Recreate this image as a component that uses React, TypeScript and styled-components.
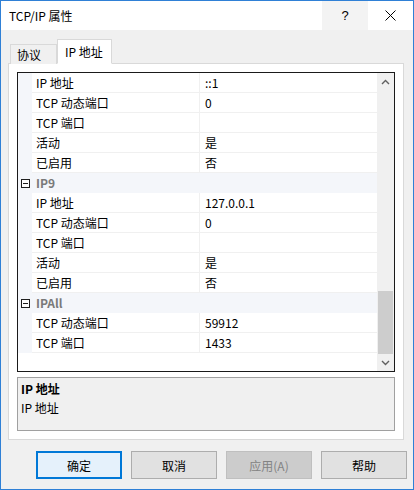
import React from 'react';
import styled, { createGlobalStyle, css } from 'styled-components';

type GridRow =
    | { kind: 'prop'; name: string; value: string }
    | { kind: 'cat'; name: string };

const rows: GridRow[] = [
    { kind: 'prop', name: 'IP 地址', value: '::1' },
    { kind: 'prop', name: 'TCP 动态端口', value: '0' },
    { kind: 'prop', name: 'TCP 端口', value: '' },
    { kind: 'prop', name: '活动', value: '是' },
    { kind: 'prop', name: '已启用', value: '否' },
    { kind: 'cat', name: 'IP9' },
    { kind: 'prop', name: 'IP 地址', value: '127.0.0.1' },
    { kind: 'prop', name: 'TCP 动态端口', value: '0' },
    { kind: 'prop', name: 'TCP 端口', value: '' },
    { kind: 'prop', name: '活动', value: '是' },
    { kind: 'prop', name: '已启用', value: '否' },
    { kind: 'cat', name: 'IPAll' },
    { kind: 'prop', name: 'TCP 动态端口', value: '59912' },
    { kind: 'prop', name: 'TCP 端口', value: '1433' },
];

export default function App() {
    return (
        <>
            <GlobalStyle />
            <Window>
                <TitleBar>
                    <Title>TCP/IP 属性</Title>
                    <HelpButton>?</HelpButton>
                    <CloseButton>
                        <svg width="11" height="11" viewBox="0 0 11 11">
                            <path d="M0.5 0.5 L10.5 10.5 M10.5 0.5 L0.5 10.5" stroke="#000" strokeWidth="1" />
                        </svg>
                    </CloseButton>
                </TitleBar>

                <Body>
                    <TabStrip>
                        <Tab>协议</Tab>
                        <Tab active>IP 地址</Tab>
                    </TabStrip>

                    <TabPanel>
                        <PropertyGrid>
                            <GridContent>
                                {rows.map((row, i) =>
                                    row.kind === 'cat' ? (
                                        <CategoryRow key={i}>
                                            <MarginCell>
                                                <svg width="9" height="9" viewBox="0 0 9 9">
                                                    <rect x="0.5" y="0.5" width="8" height="8" fill="#fff" stroke="#1e1e1e" />
                                                    <path d="M2 4.5 H7" stroke="#1e1e1e" />
                                                </svg>
                                            </MarginCell>
                                            <CategoryName>{row.name}</CategoryName>
                                        </CategoryRow>
                                    ) : (
                                        <PropRow key={i}>
                                            <MarginCell />
                                            <PropName>{row.name}</PropName>
                                            <PropValue>{row.value}</PropValue>
                                        </PropRow>
                                    )
                                )}
                            </GridContent>
                            <ScrollBar>
                                <ScrollArrow>
                                    <svg width="9" height="6" viewBox="0 0 9 6">
                                        <path d="M1 5 L4.5 1.5 L8 5" fill="none" stroke="#606060" strokeWidth="1.4" />
                                    </svg>
                                </ScrollArrow>
                                <ScrollTrack>
                                    <ScrollThumb />
                                </ScrollTrack>
                                <ScrollArrow>
                                    <svg width="9" height="6" viewBox="0 0 9 6">
                                        <path d="M1 1 L4.5 4.5 L8 1" fill="none" stroke="#606060" strokeWidth="1.4" />
                                    </svg>
                                </ScrollArrow>
                            </ScrollBar>
                        </PropertyGrid>

                        <Description>
                            <DescriptionTitle>IP 地址</DescriptionTitle>
                            <DescriptionText>IP 地址</DescriptionText>
                        </Description>
                    </TabPanel>

                    <ButtonRow>
                        <DialogButton variant="default">确定</DialogButton>
                        <DialogButton>取消</DialogButton>
                        <DialogButton variant="disabled">应用(A)</DialogButton>
                        <DialogButton>帮助</DialogButton>
                    </ButtonRow>
                </Body>
            </Window>
        </>
    );
}

const GlobalStyle = createGlobalStyle`
    html, body {
        margin: 0;
        padding: 0;
        background: #ffffff;
    }

    body {
        font-family: "Noto Sans CJK SC", "Noto Sans", sans-serif;
        font-size: 12px;
        color: #000000;
    }

    * {
        box-sizing: border-box;
    }
`;

const Window = styled.div`
    width: 414px;
    height: 490px;
    border: 1px solid #2f80d6;
    display: flex;
    flex-direction: column;
    background: #f0f0f0;
`;

const TitleBar = styled.div`
    height: 29px;
    display: flex;
    align-items: center;
    background: #ffffff;
`;

const Title = styled.div`
    flex: 1;
    padding-left: 8px;
    line-height: 29px;
`;

const HelpButton = styled.div`
    width: 46px;
    height: 29px;
    display: flex;
    align-items: center;
    justify-content: center;
    background: #f3f3f3;
    font-family: "Liberation Sans", sans-serif;
    font-size: 13px;
`;

const CloseButton = styled.div`
    width: 45px;
    height: 29px;
    display: flex;
    align-items: center;
    justify-content: center;
`;

const Body = styled.div`
    flex: 1;
    display: flex;
    flex-direction: column;
    padding: 9px 0 0 7px;
`;

const TabStrip = styled.div`
    display: flex;
    align-items: flex-end;
    padding-left: 2px;
    height: 25px;
    margin-bottom: -1px;
    position: relative;
    z-index: 1;
`;

const Tab = styled.div<{ active?: boolean }>`
    height: 20px;
    width: 47px;
    padding-left: 6px;
    line-height: 19px;
    border: 1px solid #d9d9d9;
    border-bottom: none;
    background: #f0f0f0;

    ${(props) => props.active && css`
        height: 25px;
        width: 55px;
        padding-left: 7px;
        line-height: 24px;
        background: #ffffff;
        border-bottom: 1px solid #ffffff;
    `}
`;

const TabPanel = styled.div`
    width: 396px;
    height: 377px;
    border: 1px solid #d9d9d9;
    background: #ffffff;
    padding: 8px;
    display: flex;
    flex-direction: column;
`;

const PropertyGrid = styled.div`
    height: 300px;
    border: 1px solid #1a1a1a;
    display: flex;
`;

const GridContent = styled.div`
    flex: 1;
    display: flex;
    flex-direction: column;
    background: #ffffff;
`;

const PropRow = styled.div`
    display: grid;
    grid-template-columns: 14px 168px 1fr;
    height: 20px;
`;

const CategoryRow = styled.div`
    display: grid;
    grid-template-columns: 14px 1fr;
    height: 20px;
    background: #f4f6fa;
`;

const MarginCell = styled.div`
    background: #f4f6fa;
    display: flex;
    align-items: center;
    justify-content: center;
    padding-left: 1px;
`;

const PropName = styled.div`
    padding-left: 4px;
    line-height: 19px;
    border-bottom: 1px solid #f0f0f0;
    border-right: 1px solid #f0f0f0;
`;

const PropValue = styled.div`
    padding-left: 5px;
    line-height: 19px;
    border-bottom: 1px solid #f0f0f0;
`;

const CategoryName = styled.div`
    padding-left: 4px;
    line-height: 20px;
    font-weight: bold;
    color: #7a7a7a;
`;

const ScrollBar = styled.div`
    width: 17px;
    display: flex;
    flex-direction: column;
    background: #f0f0f0;
`;

const ScrollArrow = styled.div`
    height: 17px;
    display: flex;
    align-items: center;
    justify-content: center;
`;

const ScrollTrack = styled.div`
    flex: 1;
    display: flex;
    flex-direction: column;
    justify-content: flex-end;
    align-items: center;
`;

const ScrollThumb = styled.div`
    width: 15px;
    height: 63px;
    background: #cdcdcd;
`;

const Description = styled.div`
    margin-top: 5px;
    height: 54px;
    border: 1px solid #a0a0a0;
    background: #f0f0f0;
    padding: 2px 3px;
`;

const DescriptionTitle = styled.div`
    font-weight: bold;
    line-height: 18px;
`;

const DescriptionText = styled.div`
    line-height: 20px;
`;

const ButtonRow = styled.div`
    display: flex;
    justify-content: flex-end;
    gap: 9px;
    margin-top: 11px;
    padding-right: 6px;
`;

const DialogButton = styled.div<{ variant?: 'default' | 'disabled' }>`
    width: 86px;
    height: 28px;
    display: flex;
    align-items: center;
    justify-content: center;
    background: #e1e1e1;
    border: 1px solid #adadad;

    ${(props) => props.variant === 'default' && css`
        background: #e5f1fb;
        border: 1px solid #0078d7;
        box-shadow: inset 0 0 0 1px #0078d7;
    `}

    ${(props) => props.variant === 'disabled' && css`
        background: #cccccc;
        border-color: #bfbfbf;
        color: #838383;
    `}
`;
